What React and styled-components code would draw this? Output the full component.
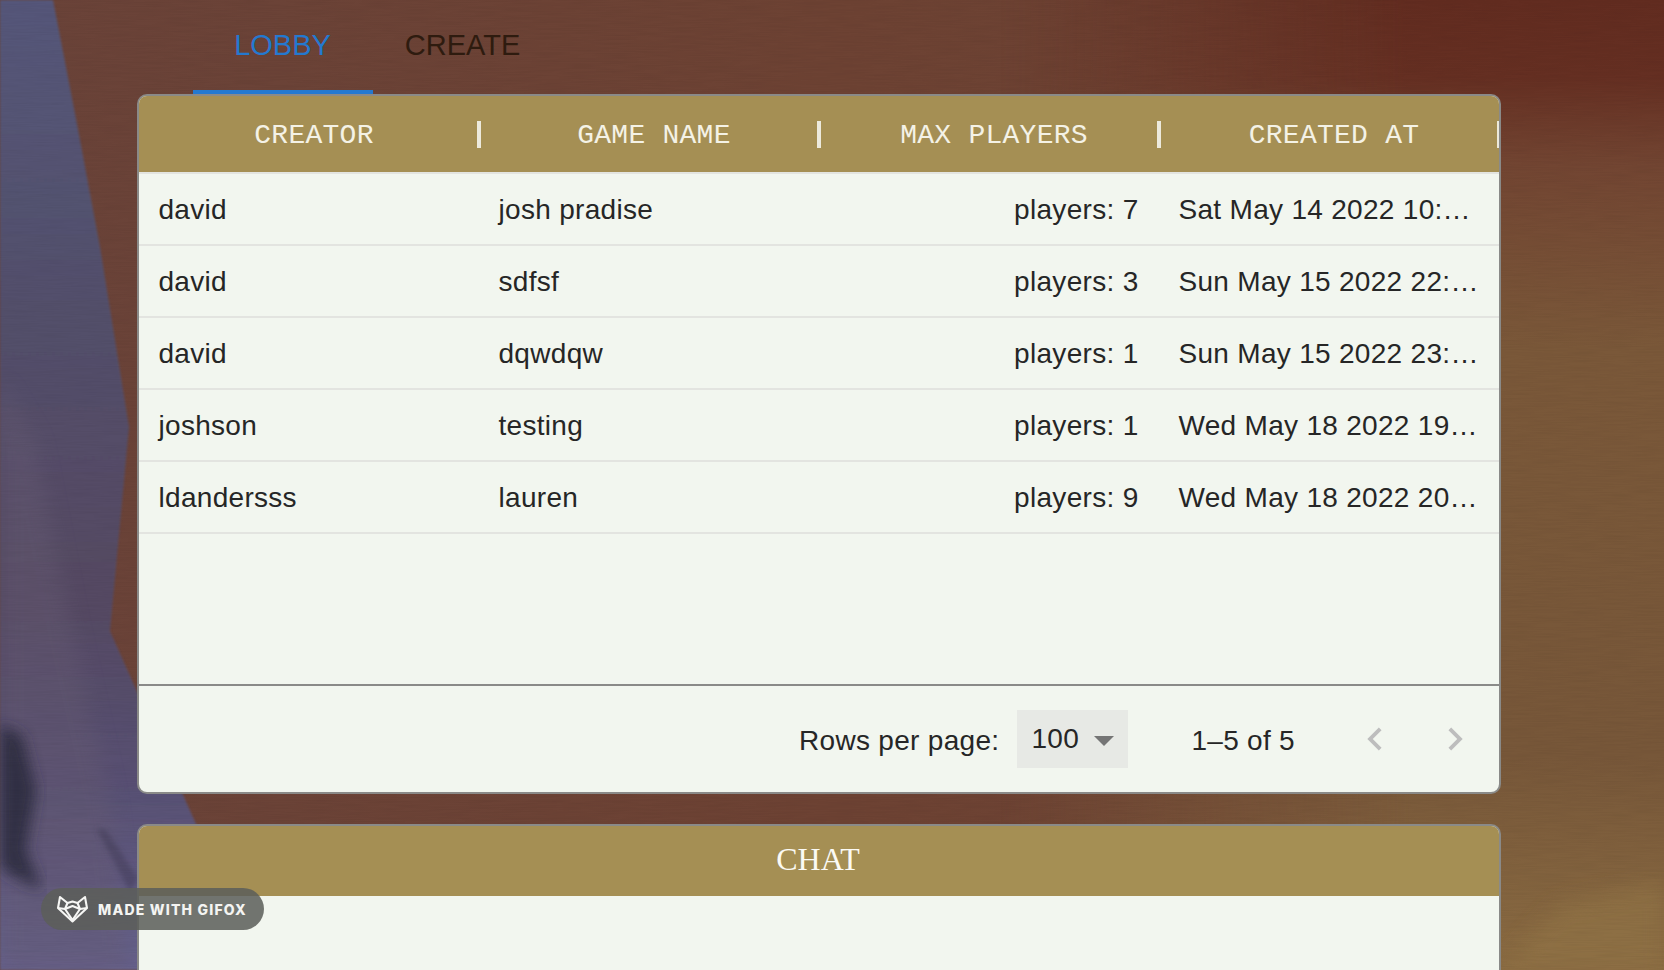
import React from 'react';
import styled, { createGlobalStyle } from 'styled-components';

const GlobalStyle = createGlobalStyle`
  html, body {
    margin: 0;
    padding: 0;
    background: #6b4335;
    font-family: "Liberation Sans", Arial, sans-serif;
  }
`;

const Page = styled.div`
  position: relative;
  width: 1664px;
  height: 970px;
  overflow: hidden;
`;

const Backdrop = styled.svg`
  position: absolute;
  inset: 0;
  width: 100%;
  height: 100%;
`;

const Content = styled.main`
  position: relative;
  width: 1364px;
  margin-left: 137px;
  display: flex;
  flex-direction: column;
  gap: 30px;
`;

const TabBar = styled.nav`
  display: flex;
  height: 94px;
  padding-left: 56px;
`;

const Tab = styled.div`
  width: 180px;
  box-sizing: border-box;
  padding: 28px 1px 0 0;
  text-align: center;
  font-size: 29px;
  line-height: 34px;
  color: ${p => (p.$active ? '#2479d0' : '#2e1b0f')};
  border-bottom: 4px solid ${p => (p.$active ? '#2479d0' : 'transparent')};
`;

const Panel = styled.section`
  box-sizing: border-box;
  background: #f2f6ef;
  border: 2px solid #8a8a88;
  border-radius: 10px;
  overflow: hidden;
`;

const LobbyPanel = styled(Panel)`
  height: 700px;
  margin-top: -30px;
  display: flex;
  flex-direction: column;
`;

const HeaderRow = styled.div`
  display: grid;
  grid-template-columns: repeat(4, 340px);
  height: 76px;
  margin-left: -1px;
  background: #a58f54;
`;

const HeaderCell = styled.div`
  position: relative;
  display: flex;
  align-items: center;
  justify-content: center;
  padding: 3px 0 0 12px;
  font-family: "Liberation Mono", "Courier New", monospace;
  font-size: 28px;
  letter-spacing: 0.25px;
  color: #f4f2e6;
  white-space: pre;

  &::after {
    content: '';
    position: absolute;
    right: -3px;
    top: 25px;
    width: 4px;
    height: 27px;
    background: #ece9dc;
  }
`;

const Rows = styled.div`
  flex: 1;
  margin-left: -0.5px;
`;

const Row = styled.div`
  display: grid;
  grid-template-columns: repeat(4, 340px);
  height: 72px;
  box-sizing: border-box;
  border-top: 2px solid #e3e4e0;
  &:last-child {
    height: 74px;
    border-bottom: 2px solid #e3e4e0;
  }
`;

const Cell = styled.div`
  box-sizing: border-box;
  padding: 0 20px;
  line-height: 72px;
  font-size: 28px;
  letter-spacing: 0.3px;
  color: #262626;
  white-space: nowrap;
  overflow: hidden;
  text-overflow: ellipsis;
  text-align: ${p => (p.$right ? 'right' : 'left')};
`;

const Footer = styled.footer`
  height: 108px;
  box-sizing: border-box;
  border-top: 2px solid #8a8a88;
  display: flex;
  align-items: center;
  justify-content: flex-end;
  font-size: 28px;
  letter-spacing: 0.3px;
  color: #262626;
  padding: 4px 4px 0 0;
`;

const FooterLabel = styled.span`
  margin-right: 18px;
`;

const RowsSelect = styled.div`
  width: 111px;
  height: 58px;
  box-sizing: border-box;
  padding-left: 14px;
  margin-top: -4px;
  display: flex;
  align-items: center;
  gap: 15px;
  background: #e7e9e5;
`;

const Caret = styled.span`
  width: 0;
  height: 0;
  border-left: 10px solid transparent;
  border-right: 10px solid transparent;
  border-top: 10px solid #757575;
  margin-top: 3px;
`;

const RangeLabel = styled.span`
  margin-left: 63px;
  margin-right: 40px;
`;

const PageButton = styled.button`
  width: 80px;
  height: 48px;
  border: 0;
  padding: 0;
  background: none;
  color: #bdbdbd;
  display: flex;
  align-items: center;
  justify-content: center;
  margin-top: -4px;
`;

const ChatPanel = styled(Panel)`
  height: 220px;
  flex: none;
`;

const ChatTitle = styled.h2`
  margin: 0;
  height: 70px;
  padding-right: 2px;
  background: #a58f54;
  color: #fbfaf4;
  font-family: "Liberation Serif", "Times New Roman", serif;
  font-size: 32px;
  font-weight: 400;
  line-height: 66px;
  text-align: center;
`;

const Watermark = styled.div`
  position: absolute;
  left: 41px;
  top: 888px;
  width: 223px;
  height: 42px;
  box-sizing: border-box;
  padding-left: 16px;
  border-radius: 21px;
  background: rgba(92, 94, 90, 0.86);
  display: flex;
  align-items: center;
  gap: 10px;
  color: #f4f4f2;
  font-family: Inter, "Open Sans", sans-serif;
  font-weight: 800;
  font-size: 14px;
  letter-spacing: 1.2px;
  white-space: nowrap;
`;

const games = [
  { creator: 'david', name: 'josh pradise', players: 7, created: 'Sat May 14 2022 10:24:51 GMT-0400' },
  { creator: 'david', name: 'sdfsf', players: 3, created: 'Sun May 15 2022 22:13:07 GMT-0400' },
  { creator: 'david', name: 'dqwdqw', players: 1, created: 'Sun May 15 2022 23:02:44 GMT-0400' },
  { creator: 'joshson', name: 'testing', players: 1, created: 'Wed May 18 2022 19:41:30 GMT-0400' },
  { creator: 'ldandersss', name: 'lauren', players: 9, created: 'Wed May 18 2022 20:05:16 GMT-0400' },
];

const columns = ['CREATOR', 'GAME NAME', 'MAX PLAYERS', 'CREATED AT'];

const Painting = () => (
  <Backdrop viewBox="0 0 1664 970" preserveAspectRatio="none">
    <defs>
      <linearGradient id="brown" x1="0" y1="0" x2="1" y2="0">
        <stop offset="0" stopColor="#6a4339" />
        <stop offset="0.5" stopColor="#6d4233" />
        <stop offset="1" stopColor="#6e4434" />
      </linearGradient>
      <linearGradient id="right" x1="0" y1="0" x2="0" y2="1">
        <stop offset="0" stopColor="#622c20" />
        <stop offset="0.08" stopColor="#652f22" />
        <stop offset="0.17" stopColor="#724532" />
        <stop offset="0.36" stopColor="#7a5839" />
        <stop offset="0.78" stopColor="#775739" />
        <stop offset="1" stopColor="#8a6b42" />
      </linearGradient>
      <linearGradient id="rightFade" x1="0" y1="0" x2="1" y2="0">
        <stop offset="0" stopColor="#fff" stopOpacity="0" />
        <stop offset="0.62" stopColor="#fff" stopOpacity="1" />
      </linearGradient>
      <mask id="rightMask">
        <rect x="1000" width="664" height="970" fill="url(#rightFade)" />
      </mask>
      <linearGradient id="purple" x1="0" y1="0" x2="0" y2="1">
        <stop offset="0" stopColor="#55577a" />
        <stop offset="0.3" stopColor="#53506c" />
        <stop offset="0.62" stopColor="#554a63" />
        <stop offset="0.82" stopColor="#595174" />
        <stop offset="1" stopColor="#66628d" />
      </linearGradient>
      <filter id="soft"><feGaussianBlur stdDeviation="10" /></filter>
      <filter id="blot"><feGaussianBlur stdDeviation="7" /></filter>
      <filter id="edge"><feGaussianBlur stdDeviation="1.2" /></filter>
      <filter id="streak"><feGaussianBlur stdDeviation="2.5" /></filter>
      <filter id="weave" x="0" y="0" width="100%" height="100%">
        <feTurbulence type="fractalNoise" baseFrequency="0.03 0.8" numOctaves="2" seed="4" />
        <feColorMatrix values="0 0 0 0 0  0 0 0 0 0  0 0 0 0 0  0 0 0 0.5 -0.18" />
      </filter>
    </defs>
    <rect width="1664" height="970" fill="url(#brown)" />
    <rect width="1664" height="970" fill="url(#right)" mask="url(#rightMask)" />
    <polygon
      points="0,0 53,0 77,124 100,247 129,427 110,631 196,824 300,970 0,970"
      fill="url(#purple)"
      filter="url(#edge)"
    />
    <polygon points="0,380 35,440 70,620 110,800 130,970 0,970" fill="#655a72" opacity="0.45" filter="url(#soft)" />
    <polygon points="0,725 22,735 36,790 26,850 42,890 10,875 0,865" fill="#2c2a3e" opacity="0.85" filter="url(#blot)" />
    <polygon points="96,828 106,830 138,878 130,892" fill="#3c3853" opacity="0.45" filter="url(#streak)" />
    <polygon points="1664,880 1560,905 1500,970 1664,970" fill="#8f7144" opacity="0.8" filter="url(#soft)" />
    <rect width="1664" height="970" filter="url(#weave)" opacity="0.14" />
  </Backdrop>
);

const FoxLogo = () => (
  <svg width="31" height="28" viewBox="0 0 31 28" fill="none" stroke="#f6f6f4" strokeWidth="2.1" strokeLinejoin="round">
    <path d="M3 2 L10.5 8 L15.5 6.5 L20.5 8 L28 2 L30 13 L15.5 26.5 L1 13 Z" />
    <path d="M1 13 L8 14 L15.5 25 L23 14 L30 13" />
    <path d="M10.5 8 L8 14 L15.5 11 L23 14 L20.5 8" />
  </svg>
);

const Chevron = ({ left }) => (
  <svg width="46" height="46" viewBox="0 0 24 24" fill="currentColor">
    <path d={left ? 'M15.41 7.41 14 6l-6 6 6 6 1.41-1.41L10.83 12z' : 'M10 6 8.59 7.41 13.17 12l-4.58 4.59L10 18l6-6z'} />
  </svg>
);

const App = () => (
  <Page>
    <GlobalStyle />
    <Painting />
    <Content>
      <TabBar>
        <Tab $active>LOBBY</Tab>
        <Tab>CREATE</Tab>
      </TabBar>
      <LobbyPanel>
        <HeaderRow>
          {columns.map(c => <HeaderCell key={c}>{c}</HeaderCell>)}
        </HeaderRow>
        <Rows>
          {games.map(g => (
            <Row key={g.created}>
              <Cell>{g.creator}</Cell>
              <Cell>{g.name}</Cell>
              <Cell $right>players: {g.players}</Cell>
              <Cell>{g.created}</Cell>
            </Row>
          ))}
        </Rows>
        <Footer>
          <FooterLabel>Rows per page:</FooterLabel>
          <RowsSelect>100<Caret /></RowsSelect>
          <RangeLabel>1–5 of 5</RangeLabel>
          <PageButton aria-label="Previous page"><Chevron left /></PageButton>
          <PageButton aria-label="Next page"><Chevron /></PageButton>
        </Footer>
      </LobbyPanel>
      <ChatPanel>
        <ChatTitle>CHAT</ChatTitle>
      </ChatPanel>
    </Content>
    <Watermark><FoxLogo />MADE WITH GIFOX</Watermark>
  </Page>
);

export default App;
